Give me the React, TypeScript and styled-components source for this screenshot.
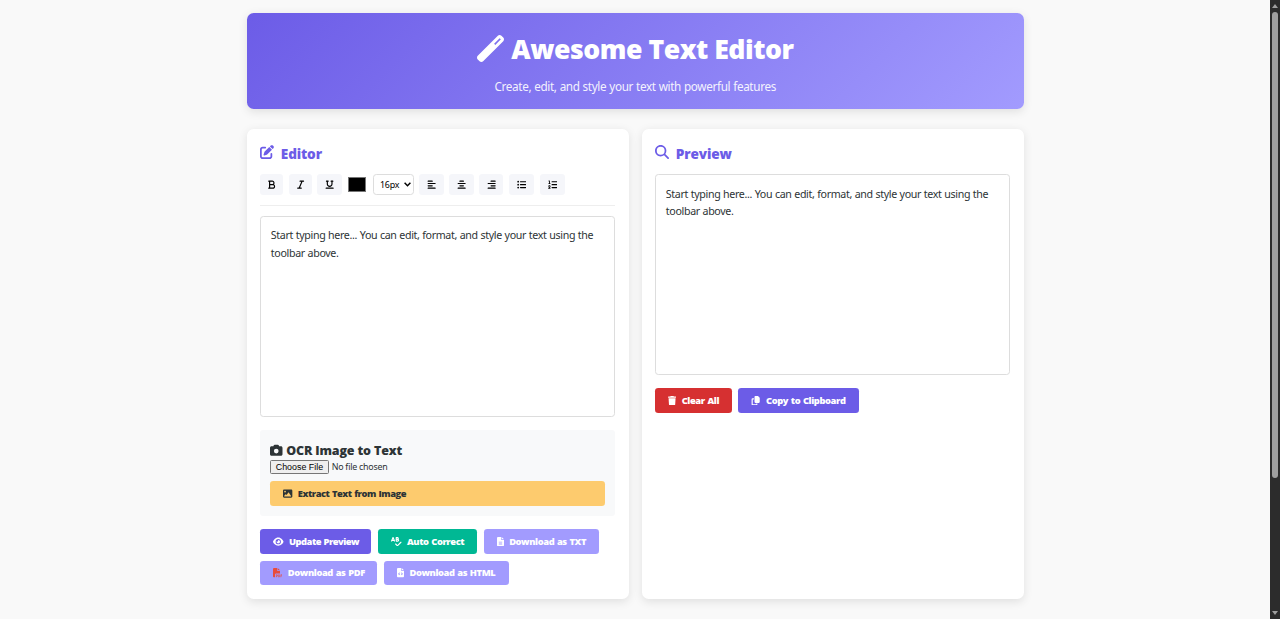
import React from "react";
import styled, { createGlobalStyle } from "styled-components";
import {
  FaWandMagic, FaPenToSquare, FaMagnifyingGlass, FaBold, FaItalic, FaUnderline,
  FaAlignLeft, FaAlignCenter, FaAlignRight, FaListUl, FaListOl, FaCamera, FaImage,
  FaEye, FaSpellCheck, FaFileLines, FaFilePdf, FaFileCode, FaTrash, FaCopy,
} from "react-icons/fa6";

const Global = createGlobalStyle`
  *, *::before, *::after { box-sizing: border-box; }
  body {
    margin: 0; height: 619px; overflow: hidden; background: #f9f9f9; color: #2d3436;
    font-family: "Noto Sans", "Open Sans", sans-serif; font-size: 10.67px;
  }
  h1, h2, h3, p { margin: 0; }
  h1, h2, h3, button { font-family: "Open Sans", "Noto Sans", sans-serif; }
  button { margin: 0; }
  svg { display: block; flex: none; }
`;

const Page = styled.div`
  display: flex;
  height: 619px;
`;
const Main = styled.main`
  flex: 1;
  display: flex;
  flex-direction: column;
  align-items: center;
  gap: 20px;
  padding: 13.4px 0 0 0.4px;
`;
const Header = styled.header`
  width: 776.67px;
  height: 95.33px;
  flex: none;
  border-radius: 6.67px;
  background: linear-gradient(135deg, #6c5ce7, #a29bfe);
  box-shadow: 0 2.67px 10px rgba(0, 0, 0, 0.1);
  color: #fff;
  display: flex;
  flex-direction: column;
  align-items: center;
  padding-top: 17px;
`;
const Title = styled.h1`
  display: flex;
  align-items: center;
  gap: 7.5px;
  height: 36px;
  font-size: 26.67px;
  font-weight: 800;
  letter-spacing: -0.48px;
  white-space: nowrap;
`;
const Tagline = styled.p`
  margin-top: 10.4px;
  font-size: 11.73px;
  line-height: 18px;
  letter-spacing: -0.35px;
  word-spacing: 0.3px;
  opacity: 0.9;
  white-space: nowrap;
`;
const Columns = styled.div`
  width: 776.67px;
  height: 470.5px;
  display: grid;
  grid-template-columns: repeat(2, minmax(0, 1fr));
  gap: 13.33px;
`;
const Card = styled.section`
  display: flex;
  flex-direction: column;
  padding: 13.33px;
  border-radius: 6.67px;
  background: #fff;
  box-shadow: 0 2.67px 10px rgba(0, 0, 0, 0.1);
`;
const CardTitle = styled.h2`
  display: flex;
  align-items: center;
  gap: 6.67px;
  height: 23px;
  margin-bottom: 9px;
  color: #6c5ce7;
  font-size: 13.6px;
  font-weight: 800;
  letter-spacing: -0.15px;
  svg { margin-top: -3px; }
`;
const Toolbar = styled.div`
  display: flex;
  align-items: center;
  gap: 5.5px;
  height: 32px;
  padding-bottom: 10.5px;
  margin-bottom: 9.8px;
  border-bottom: 1px solid #eee;
`;
const Tool = styled.button<{ $w: number }>`
  width: ${(p) => p.$w}px;
  height: 21px;
  padding: 0;
  border: 0;
  border-radius: 3.33px;
  background: #f5f6fa;
  color: #000;
  display: flex;
  align-items: center;
  justify-content: center;
`;
const Swatch = styled.div`
  width: 18px;
  height: 15px;
  border: 1px solid #767676;
  background: #000;
  margin: 0 1.3px 0 1px;
`;
const SizeSelect = styled.div`
  width: 41px;
  height: 21px;
  border: 1px solid #ddd;
  border-radius: 3.33px;
  display: flex;
  align-items: center;
  justify-content: space-between;
  padding: 0 2px 0 6px;
  font-size: 8.9px;
  letter-spacing: -0.2px;
  color: #000;
`;
const TextArea = styled.div`
  height: 200.9px;
  border: 1px solid #ddd;
  border-radius: 3.33px;
  padding: 10.6px 9.6px;
  font-size: 10.67px;
  line-height: 17.4px;
  letter-spacing: -0.335px;
  word-spacing: 0.22px;
  white-space: nowrap;
`;
const OcrPanel = styled.div`
  height: 86px;
  margin-top: 13.2px;
  padding: 11px 10px 10px;
  border-radius: 3.33px;
  background: #f8f9fa;
  display: flex;
  flex-direction: column;
`;
const OcrTitle = styled.h3`
  display: flex;
  align-items: center;
  gap: 3.5px;
  height: 19px;
  font-size: 12.48px;
  font-weight: 800;
  letter-spacing: -0.15px;
  white-space: nowrap;
`;
const FileRow = styled.div`
  display: flex;
  align-items: center;
  gap: 3px;
  height: 14px;
  margin-bottom: 7px;
  font-size: 8.9px;
  letter-spacing: -0.25px;
`;
const FileButton = styled.button`
  width: 58.5px;
  height: 14px;
  padding: 0;
  border: 1px solid #767676;
  border-radius: 1.5px;
  background: #efefef;
  color: #000;
  font: 8.9px/12px "Liberation Sans", Arial, sans-serif;
  letter-spacing: 0;
  white-space: nowrap;
`;
const Actions = styled.div`
  display: flex;
  flex-wrap: wrap;
  gap: 6.67px;
  margin-top: 13.4px;
`;
const Button = styled.button<{ $bg: string; $icon: number; $fg?: string; $w?: number; $ls?: number }>`
  width: ${(p) => (p.$w ? `${p.$w}px` : "100%")};
  height: 24.67px;
  padding: 0 0 0 13px;
  border: 0;
  border-radius: 3.33px;
  background: ${(p) => p.$bg};
  color: ${(p) => p.$fg ?? "#fff"};
  display: flex;
  align-items: center;
  gap: 5.33px;
  font-size: 9.33px;
  font-weight: 800;
  letter-spacing: ${(p) => p.$ls ?? -0.4}px;
  word-spacing: 0.7px;
  white-space: nowrap;
  svg { width: ${(p) => p.$icon}px; height: 9.33px; }
`;
const ScrollTrack = styled.div`
  width: 10px;
  background: #2c2c2c;
  display: flex;
  flex-direction: column;
  align-items: center;
  padding: 4px 0;
`;
const Thumb = styled.div`
  width: 6px;
  height: 466px;
  margin-top: 4px;
  margin-bottom: auto;
  border-radius: 3px;
  background: #9f9f9f;
`;

const Sample = () => (
  <>
    Start typing here... You can edit, format, and style your text using the
    <br />
    toolbar above.
  </>
);

export default function App() {
  return (
    <>
      <Global />
      <Page>
        <Main>
          <Header>
            <Title><FaWandMagic size={27} />Awesome Text Editor</Title>
            <Tagline>Create, edit, and style your text with powerful features</Tagline>
          </Header>
          <Columns>
            <Card>
              <CardTitle><FaPenToSquare size={14} />Editor</CardTitle>
              <Toolbar>
                <Tool $w={23}><FaBold size={9.3} /></Tool>
                <Tool $w={23}><FaItalic size={9.3} /></Tool>
                <Tool $w={24.5}><FaUnderline size={9.3} /></Tool>
                <Swatch />
                <SizeSelect>
                  16px
                  <svg width="7" height="5" viewBox="0 0 7 5" fill="none" stroke="#000" strokeWidth="1.5">
                    <path d="M.6.8 3.5 3.7 6.4.8" />
                  </svg>
                </SizeSelect>
                <Tool $w={24.3}><FaAlignLeft size={9.3} /></Tool>
                <Tool $w={24.3}><FaAlignCenter size={9.3} /></Tool>
                <Tool $w={24.3}><FaAlignRight size={9.3} /></Tool>
                <Tool $w={25.5}><FaListUl size={9.3} /></Tool>
                <Tool $w={25.5}><FaListOl size={9.3} /></Tool>
              </Toolbar>
              <TextArea><Sample /></TextArea>
              <OcrPanel>
                <OcrTitle><FaCamera size={12.5} />OCR Image to Text</OcrTitle>
                <FileRow><FileButton>Choose File</FileButton>No file chosen</FileRow>
                <Button $bg="#fdcb6e" $fg="#2d3436" $icon={9.33} $ls={-0.47}><FaImage />Extract Text from Image</Button>
              </OcrPanel>
              <Actions>
                <Button $bg="#6c5ce7" $w={111.3} $icon={10.5} $ls={-0.5}><FaEye />Update Preview</Button>
                <Button $bg="#00b894" $w={99} $icon={10.5} $ls={-0.42}><FaSpellCheck />Auto Correct</Button>
                <Button $bg="#a29bfe" $w={115.3} $icon={7}><FaFileLines />Download as TXT</Button>
                <Button $bg="#a29bfe" $w={117.3} $icon={9.33}><FaFilePdf color="#e74c3c" />Download as PDF</Button>
                <Button $bg="#a29bfe" $w={125} $icon={7}><FaFileCode />Download as HTML</Button>
              </Actions>
            </Card>
            <Card>
              <CardTitle><FaMagnifyingGlass size={14} />Preview</CardTitle>
              <TextArea><Sample /></TextArea>
              <Actions>
                <Button $bg="#d63031" $w={76.5} $icon={8.17}><FaTrash />Clear All</Button>
                <Button $bg="#6c5ce7" $w={120.7} $icon={9.33}><FaCopy />Copy to Clipboard</Button>
              </Actions>
            </Card>
          </Columns>
        </Main>
        <ScrollTrack>
          <svg width="6" height="4" viewBox="0 0 6 4"><path d="M3 0 6 4H0Z" fill="#9f9f9f" /></svg>
          <Thumb />
          <svg width="6" height="4" viewBox="0 0 6 4"><path d="M0 0H6L3 4Z" fill="#9f9f9f" /></svg>
        </ScrollTrack>
      </Page>
    </>
  );
}
